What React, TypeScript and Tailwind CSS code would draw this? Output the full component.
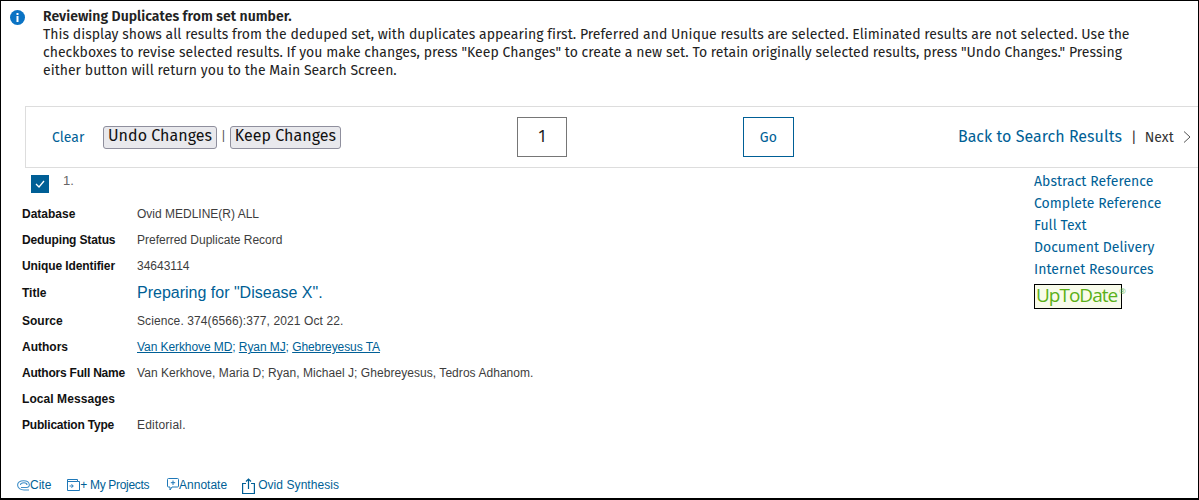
import React from 'react';

const fira = "font-['Fira_Sans','Noto_Sans',sans-serif] tracking-[0.03px]";

const rows: { label: string; labelClass?: string; value: React.ReactNode; valueClass?: string; tall?: boolean }[] = [
  { label: 'Database', value: 'Ovid MEDLINE(R) ALL' },
  { label: 'Deduping Status', labelClass: 'tracking-[-0.13px]', value: 'Preferred Duplicate Record' },
  { label: 'Unique Identifier', labelClass: 'tracking-[-0.1px]', value: '34643114' },
  {
    label: 'Title',
    value: <span className="text-[16px] text-[#005f96]">Preparing for "Disease X".</span>,
    tall: true,
  },
  { label: 'Source', value: 'Science. 374(6566):377, 2021 Oct 22.', valueClass: 'tracking-[0.1px]' },
  {
    label: 'Authors',
    value: (
      <span className="text-[#005f96]">
        <a className="underline">Van Kerkhove MD</a>; <a className="underline">Ryan MJ</a>;{' '}
        <a className="underline">Ghebreyesus TA</a>
      </span>
    ),
    valueClass: 'tracking-[-0.08px]',
  },
  {
    label: 'Authors Full Name',
    labelClass: 'tracking-[-0.22px]',
    value: 'Van Kerkhove, Maria D; Ryan, Michael J; Ghebreyesus, Tedros Adhanom.',
    valueClass: 'tracking-[0.05px]',
  },
  { label: 'Local Messages', labelClass: 'tracking-[0.07px]', value: '' },
  { label: 'Publication Type', labelClass: 'tracking-[-0.19px]', value: 'Editorial.', valueClass: 'tracking-[0.2px]' },
];

const sideLinks = ['Abstract Reference', 'Complete Reference', 'Full Text', 'Document Delivery', 'Internet Resources'];

const InfoDot = () => (
  <svg className="mt-[2px] shrink-0" width="15" height="15" viewBox="0 0 15 15">
    <circle cx="7.500" cy="7.500" r="7.500" fill="#0a73c4" />
    <rect x="6.500" y="3" width="2" height="2" fill="#fff" />
    <rect x="6.500" y="6" width="2" height="6" fill="#fff" />
  </svg>
);

const CiteIcon = () => (
  <svg className="mb-[3px]" width="13" height="11" viewBox="0 0 13 11" fill="none" stroke="#3f8fc8" strokeWidth="1.100">
    <path d="M4 7.500H9.500C11.500 7.500 12.500 6 12.300 4.500 12 2 9.500 0.700 6.500 0.700 3 0.700 0.600 2.500 0.600 5 0.600 8 3.500 10 7 10H12" />
    <path d="M3.500 5c0-1.300 1.500-2.200 3.500-2.200S10 3.500 10 5" />
  </svg>
);

const ProjectIcon = () => (
  <svg className="mb-[3px]" width="13" height="12" viewBox="0 0 13 12" fill="none" stroke="#1f78b8" strokeWidth="1">
    <path d="M0.500 0.500h10v2h2v9h-12z" />
    <path d="M0.500 2.500h10" />
    <path d="M2.500 7h3.500M4.500 5.200L6.300 7 4.500 8.800" />
  </svg>
);

const AnnotateIcon = () => (
  <svg className="mb-[3px]" width="12" height="13" viewBox="0 0 12 13" fill="none" stroke="#1f78b8" strokeWidth="1">
    <path d="M1.500 0.500h9a1 1 0 0 1 1 1v6.500a1 1 0 0 1-1 1h-5.500l-2 3v-3h-1.500a1 1 0 0 1-1-1v-6.500a1 1 0 0 1 1-1z" />
    <path d="M6 2.500v4.500M3.800 4.700h4.400" />
  </svg>
);

const ShareIcon = () => (
  <svg width="13" height="16" viewBox="0 0 13 16" fill="none" stroke="#005f96" strokeWidth="1.200">
    <path d="M4 5.500H0.600v10h11.800v-10H9" />
    <path d="M6.500 11V1M4 3.500L6.500 1 9 3.500" />
  </svg>
);

export default function App() {
  return (
    <div className="h-[500px] w-[1199px] overflow-hidden border border-b-2 border-black bg-white flex flex-col">
      {/* notice */}
      <div className={`flex h-[105px] pt-[7px] pl-[9px] text-[14px] leading-[18px] text-[#222] ${fira}`}>
        <InfoDot />
        <div className="ml-[18px] w-[1110px]">
          <div className="font-semibold">Reviewing Duplicates from set number.</div>
          <p>
            This display shows all results from the deduped set, with duplicates appearing first. Preferred and Unique
            results are selected. Eliminated results are not selected. Use the checkboxes to revise selected results. If
            you make changes, press "Keep Changes" to create a new set. To retain originally selected results, press
            "Undo Changes." Pressing either button will return you to the Main Search Screen.
          </p>
        </div>
      </div>

      {/* toolbar */}
      <div className={`ml-[24px] flex h-[62px] shrink-0 items-center border border-r-0 border-[#ddd] ${fira}`}>
        <a className="ml-[26px] w-[51px] text-[14px] text-[#005f96]">Clear</a>
        <button className="h-[23px] w-[114px] rounded-[3px] border border-[#8f8f9d] bg-[#e9e9ed] pb-[2px] text-[16px] leading-none text-[#111]">
          Undo Changes
        </button>
        <span className="mx-[4px] text-[12px] text-[#555]">|</span>
        <button className="h-[23px] w-[111px] rounded-[3px] border border-[#8f8f9d] bg-[#e9e9ed] pb-[2px] text-[16px] leading-none text-[#111]">
          Keep Changes
        </button>
        <div className="ml-[176px] flex h-[40px] w-[50px] items-center justify-center border border-[#767676] text-[16px] text-[#222]">
          1
        </div>
        <button className="ml-[176px] h-[40px] w-[51px] border border-[#005f96] text-[14px] text-[#005f96]">Go</button>
        <a className="ml-[164px] text-[16px] text-[#005f96]">Back to Search Results</a>
        <span className="ml-[9px] text-[14px] text-[#333]">|</span>
        <span className="ml-[8px] text-[14px] text-[#333]">Next</span>
        <svg className="ml-[9px]" width="8" height="12" viewBox="0 0 8 12" fill="none" stroke="#555" strokeWidth="1">
          <path d="M1 0.500L7 6 1 11.500" />
        </svg>
      </div>

      {/* record */}
      <div className="flex flex-1 min-h-0">
        <div className="flex w-[1033px] flex-col font-['Liberation_Sans',Arial,sans-serif] text-[12px] text-[#3d3d3d]">
          <div className="ml-[30px] mt-[7px] flex h-[26px] items-start">
            <span className="flex h-[18px] w-[18px] items-center justify-center bg-[#005f96]">
              <svg width="10" height="8" viewBox="0 0 10 8" fill="none" stroke="#fff" strokeWidth="1.300">
                <path d="M1 4l3 3 5-6" />
              </svg>
            </span>
            <span className="ml-[14px] text-[13px] leading-[12px] text-[#666]">1.</span>
          </div>
          <div className="ml-[21px]">
            {rows.map((r) => (
              <div key={r.label} className={`flex items-center ${r.tall ? 'h-[29px] pb-[2px]' : 'h-[26px]'}`}>
                <span className={`w-[115px] font-bold text-[#111] ${r.labelClass ?? ''}`}>{r.label}</span>
                <span className={r.valueClass}>{r.value}</span>
              </div>
            ))}
          </div>
          <div className="ml-[16px] mt-auto mb-[4px] flex items-end text-[#005f96]">
            <CiteIcon />
            <span>Cite</span>
            <span className="ml-[16px]">
              <ProjectIcon />
            </span>
            <span className="tracking-[-0.33px]">+ My Projects</span>
            <span className="ml-[18px]">
              <AnnotateIcon />
            </span>
            <span>Annotate</span>
            <span className="ml-[15px]">
              <ShareIcon />
            </span>
            <span className="ml-[3px] tracking-[0.07px]">Ovid Synthesis</span>
          </div>
        </div>
        <div className={`mt-[3px] flex flex-col text-[14px] leading-[22px] text-[#005f96] ${fira}`}>
          {sideLinks.map((l) => (
            <a key={l}>{l}</a>
          ))}
          <div className="mt-[3px] flex h-[25px] w-[88px] items-start border border-black bg-[#f8fbea] pl-[1px] font-['Open_Sans',sans-serif] text-[19px] leading-[21px] tracking-[-1px] text-[#5bb017]">
            <span>UpToDate</span>
            <span className="ml-[2px] mt-[1px] text-[8px] leading-[10px] tracking-normal text-[#7cb94a]">®</span>
          </div>
        </div>
      </div>
    </div>
  );
}
